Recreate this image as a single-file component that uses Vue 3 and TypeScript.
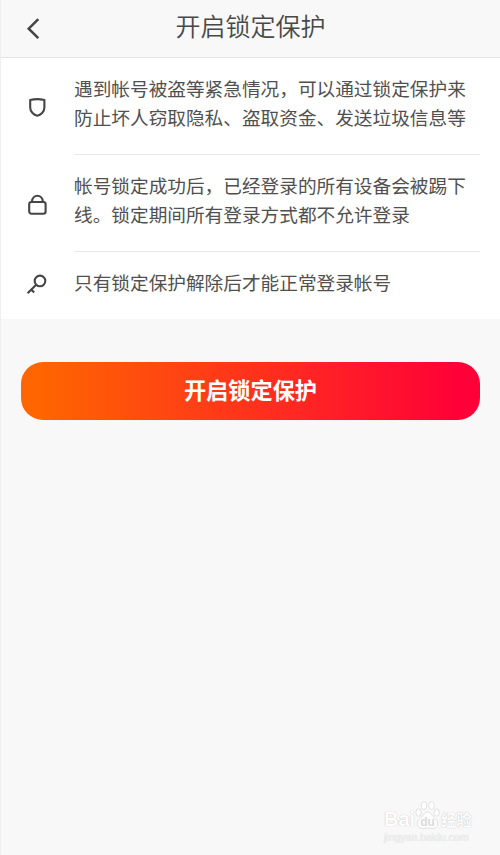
<script setup lang="ts">
type IconName = 'shield' | 'lock' | 'key'

interface Notice {
  icon: IconName
  lines: string[]
}

const title = '开启锁定保护'

const notices: Notice[] = [
  {
    icon: 'shield',
    lines: ['遇到帐号被盗等紧急情况，可以通过锁定保护来', '防止坏人窃取隐私、盗取资金、发送垃圾信息等'],
  },
  {
    icon: 'lock',
    lines: ['帐号锁定成功后，已经登录的所有设备会被踢下', '线。锁定期间所有登录方式都不允许登录'],
  },
  { icon: 'key', lines: ['只有锁定保护解除后才能正常登录帐号'] },
]
</script>

<template>
  <main class="page">
    <header class="bar">
      <button class="back" type="button" aria-label="返回">
        <svg width="14" height="22" viewBox="0 0 14 22">
          <path d="M12.3 1.2 2.7 10.7l9.6 9.5" />
        </svg>
      </button>
      <h1>{{ title }}</h1>
    </header>

    <ul class="notices">
      <li v-for="item in notices" :key="item.icon" class="notice">
        <div class="icon">
          <svg width="24" height="24" viewBox="0 0 24 24">
            <path
              v-if="item.icon === 'shield'"
              d="M5.2 5.1Q12.3 3.1 19.4 5.1V12.4C19.4 16.9 15.6 20 12.3 20.7C9 20 5.2 16.9 5.2 12.4Z"
            />
            <template v-else-if="item.icon === 'lock'">
              <rect x="4.2" y="10" width="16.4" height="11.7" rx="2.2" />
              <path d="M6.9 9.6C7.6 1.8 17.2 1.8 17.9 9.6" />
            </template>
            <template v-else>
              <circle cx="15" cy="6.9" r="5.3" />
              <path d="M11.2 10.7 2.6 19.3M6.2 15.7l3 2.7" />
            </template>
          </svg>
        </div>
        <p class="copy">
          <span v-for="line in item.lines" :key="line">{{ line }}</span>
        </p>
      </li>
    </ul>

    <button class="submit" type="button">{{ title }}</button>

    <footer class="mark">
      <div class="brand">
        <span class="latin">Bai</span>
        <svg width="25" height="30" viewBox="0 0 25 30">
          <ellipse cx="3.5" cy="12.5" rx="2.6" ry="3.7" />
          <ellipse cx="9" cy="5.5" rx="2.8" ry="4" />
          <ellipse cx="16.5" cy="5.5" rx="2.8" ry="4" />
          <ellipse cx="21.7" cy="12.5" rx="2.6" ry="3.7" />
          <path d="M12.5 12C9 12 8 16 4.5 19C0 23 3 29 8 28.5Q12.5 27.5 17 28.5C22 29 25 23 20.5 19C17 16 16 12 12.5 12Z" />
          <text x="12.5" y="26" text-anchor="middle">du</text>
        </svg>
        <span class="han">经验</span>
      </div>
      <div class="site">jingyan.baidu.com</div>
    </footer>
  </main>
</template>

<style>
body {
  background: #f8f8f8;
}
</style>

<style scoped>
.page {
  box-sizing: border-box;
  display: flex;
  flex-direction: column;
  height: 855px;
  border-left: 1px solid #efefef;
  background: #f8f8f8;
  color: #505050;
  font-family: 'Noto Sans CJK SC', sans-serif;
}

.bar {
  box-sizing: border-box;
  display: grid;
  grid-template-columns: 60px 1fr 60px;
  align-items: center;
  height: 58px;
  border-bottom: 1px solid #e5e5e5;
}

h1 {
  margin: 0;
  padding-bottom: 8px;
  font-size: 25px;
  font-weight: 350;
  line-height: 36px;
  text-align: center;
  color: #484848;
}

.back {
  display: flex;
  padding: 0 0 0 25px;
  border: 0;
  background: none;
}

svg {
  display: block;
  fill: none;
  stroke: #454545;
  stroke-width: 2.1;
  stroke-linejoin: round;
}

.back svg {
  stroke-width: 2.5;
  stroke-linejoin: miter;
}

.notices {
  margin: 0;
  padding: 0 20px 0 0;
  background: #fff;
  list-style: none;
}

.notice {
  display: grid;
  grid-template-columns: 73px 1fr;
}

.icon {
  display: flex;
  align-items: center;
  padding: 1px 0 0 24px;
}

.copy {
  margin: 0;
  padding: 15px 0 23px;
  border-bottom: 1px solid #e9e9e9;
  font-size: 18.67px;
  line-height: 29px;
  white-space: nowrap;
}

.copy span {
  display: block;
}

.notice:last-child .copy {
  border-bottom: 0;
}

.submit {
  flex: none;
  height: 58px;
  margin: 43px 20px 0;
  padding: 0 0 5px;
  border: 0;
  border-radius: 22px;
  background: linear-gradient(90deg, #ff6500 4%, #ff0038 96%);
  color: #fff;
  font: 700 22.2px/32px 'Noto Sans CJK SC', sans-serif;
}

.mark {
  align-self: flex-end;
  width: 90px;
  margin: auto 26px 11px 0;
  color: #fff;
  text-shadow: 0 0 1px #aaa;
}

.brand {
  display: flex;
  align-items: flex-end;
  height: 30px;
}

.latin {
  width: 31px;
  font: 700 20px/22px 'Liberation Sans', sans-serif;
}

.brand svg {
  flex: none;
  fill: #fff;
  stroke: #d4d4d4;
  stroke-width: 0.7;
}

.brand text {
  fill: #dadada;
  stroke: none;
  font: 700 12px 'Liberation Sans', sans-serif;
  text-shadow: none;
}

.han {
  margin-left: 1px;
  font-size: 15.5px;
  font-weight: 700;
  line-height: 22px;
  white-space: nowrap;
}

.site {
  color: #f1f1f1;
  font: 10.5px/14px 'Liberation Sans', sans-serif;
  text-shadow: 0 0 1px #d0d0d0;
  white-space: nowrap;
}
</style>
